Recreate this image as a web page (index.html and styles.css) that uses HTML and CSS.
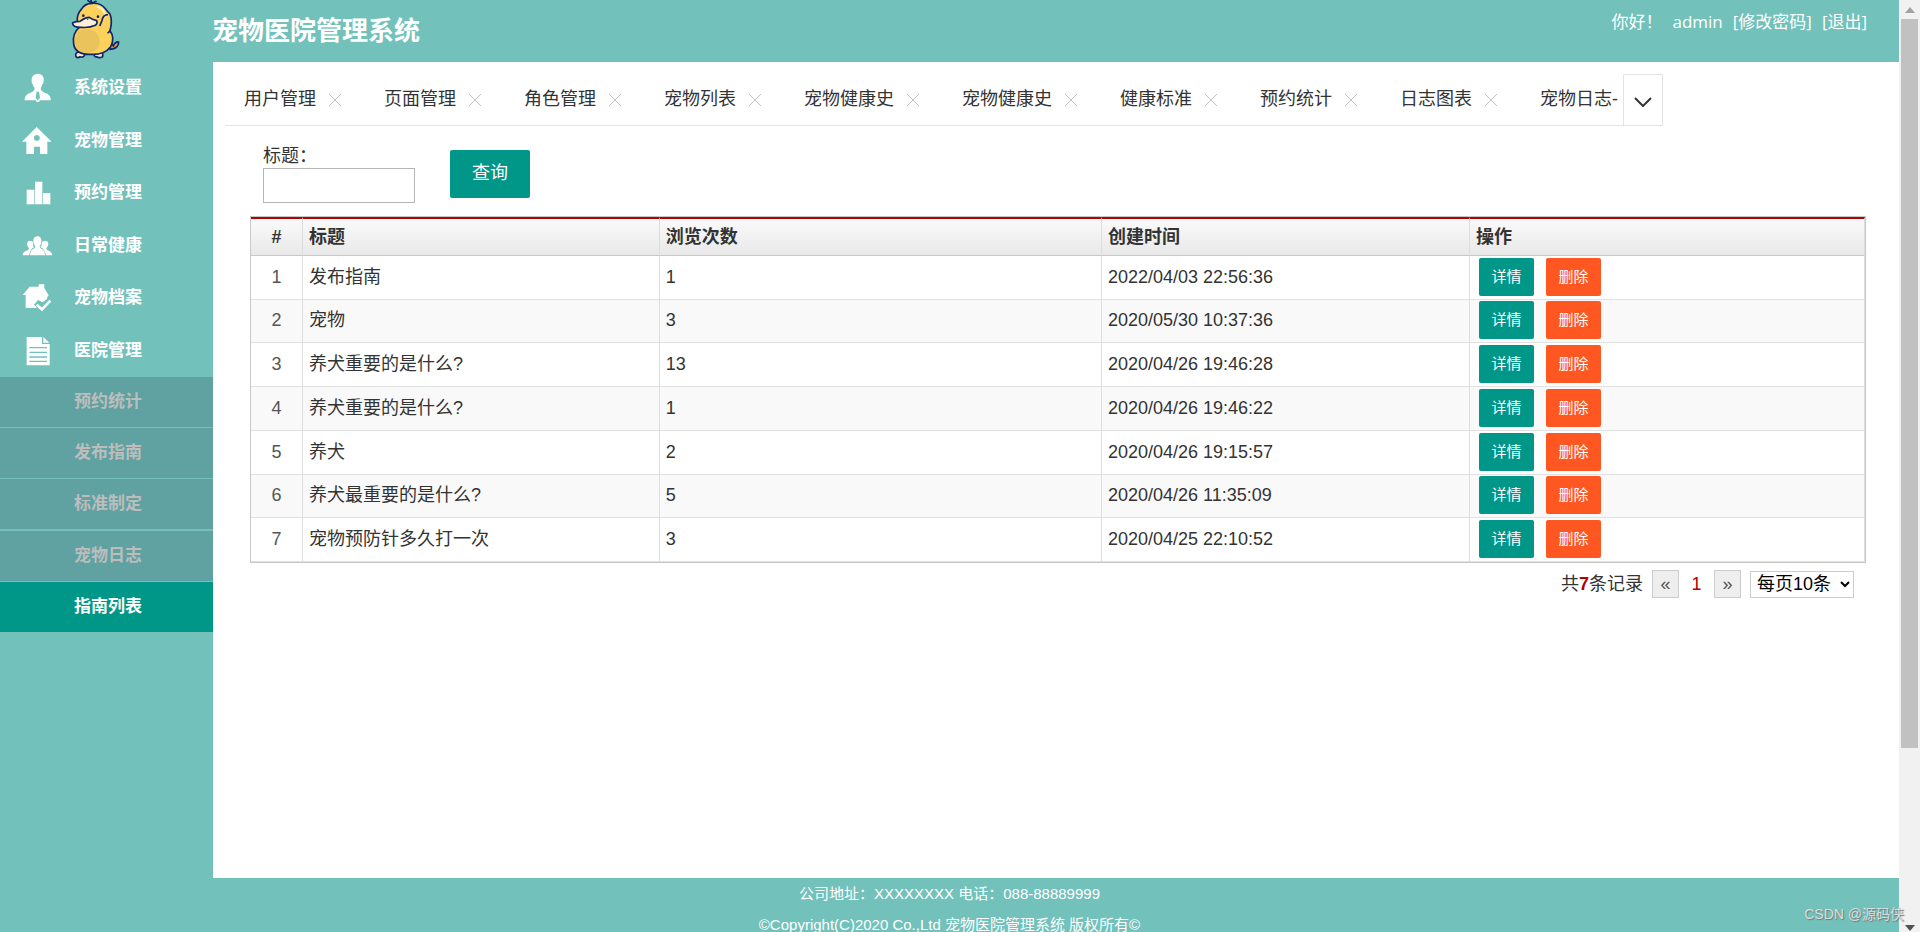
FILE: index.html
```html
<!DOCTYPE html>
<html lang="zh-CN">
<head>
<meta charset="utf-8">
<title>宠物医院管理系统</title>
<link rel="stylesheet" href="styles.css">
</head>
<body>
<div class="screen">
<div class="page">
  <header class="header">
    <svg class="logo" viewBox="0 0 210 192" aria-hidden="true">
      <g stroke="#13256b" stroke-width="5" stroke-linejoin="round" stroke-linecap="round">
        <path d="M152 128 L160 138 Q166 124 176 126 Q176 146 150 148 Z" fill="#dca43a"/>
        <path d="M48 170 Q44 158 56 156 Q70 152 74 164 Q72 174 60 170 Q54 176 48 170Z M102 164 Q110 152 124 156 Q130 160 128 170 Q116 176 110 170 Q104 172 102 164Z" fill="#fbead0"/>
        <path d="M96 10 Q74 10 64 28 Q50 42 52 64 L58 82 Q36 100 41 132 Q46 164 90 163 Q132 166 152 140 Q166 114 150 92 Q158 64 150 42 Q142 34 136 26 Q122 8 96 10Z" fill="#fdd25c"/>
        <path d="M96 10 L84 2 M96 10 L92 -2 M96 10 L108 4" fill="none"/>
      </g>
      <path d="M54 94 Q84 80 104 94 Q124 112 118 136 Q112 154 88 158 Q56 160 47 138 Q41 112 54 94Z" fill="#ebc35c"/>
      <path d="M112 20 Q134 26 136 50" stroke="#fff3cd" stroke-width="6" fill="none"/>
      <g stroke="#13256b" stroke-width="5" stroke-linecap="round" stroke-linejoin="round">
        <path d="M38 68 Q48 64 60 64 Q76 52 88 52 Q96 58 110 62 Q114 70 106 76 Q88 84 64 82 Q36 82 38 68Z" fill="#fff0d5"/>
        <path d="M142 44 Q128 46 126 62 L120 76 M144 98 Q148 96 150 92" fill="none"/>
      </g>
      <circle cx="70" cy="47" r="4" fill="#13256b"/><circle cx="114" cy="50" r="4" fill="#13256b"/>
      <circle cx="83" cy="58" r="2" fill="#13256b"/>
    </svg>
    <h1 class="title">宠物医院管理系统</h1>
    <div class="account">
      <span>你好！</span><span>admin</span><a href="#">[修改密码]</a><a href="#">[退出]</a>
    </div>
  </header>
  <div class="body">
    <nav class="sidebar">
      <ul class="menu">
        <li><a class="item" href="#"><svg class="icon" viewBox="0 0 90 90"><path d="M47 2 Q66 2 65 22 Q66 30 61 34 Q59 42 56 45 Q56 54 68 59 Q87 64 86 82 H53 L51 87 H44 L42 82 H8 Q7 64 26 59 Q38 54 38 45 Q34 40 32 34 Q28 30 29 22 Q28 4 47 2Z"/><path class="cut" d="M44 56 H51 L54 74 L47 83 L41 74Z"/></svg>系统设置</a></li>
        <li><a class="item" href="#"><svg class="icon" viewBox="0 0 90 90"><path fill-rule="evenodd" d="M44 3 L89 47 H76 V84 H54 V62 H36 V84 H13 V47 H0Z M44 27 A9 9 0 1 0 45 27Z"/></svg>宠物管理</a></li>
        <li><a class="item" href="#"><svg class="icon" viewBox="0 0 90 90"><path d="M14 35 H37 V79 H14Z M39 11 H61 V79 H39Z M63 45 H85 V79 H63Z"/></svg>预约管理</a></li>
        <li><a class="item" href="#"><svg class="icon" viewBox="0 0 90 90"><path d="M46 16 Q60 16 58 34 Q57 42 53 46 Q53 52 64 57 Q69 62 69 73 H24 Q24 62 29 57 Q40 52 40 46 Q34 40 34 32 Q33 17 46 16Z M25 29 Q31 29 33 34 Q32 44 36 49 Q23 55 22 73 H2 Q2 63 13 59 Q21 57 21 52 Q15 47 15 39 Q15 29 25 29Z M68 29 Q61 29 60 34 Q60 44 56 49 Q70 55 71 73 H91 Q90 63 80 59 Q73 57 73 52 Q79 47 79 39 Q79 29 68 29Z"/></svg>日常健康</a></li>
        <li><a class="item" href="#"><svg class="icon" viewBox="0 0 90 90"><path d="M23 11 H50 V4 H67 V15 L80 37 L76 42 L75 48 L62 58 L48 51 L36 65 L45 75 H11 V36 H2Z"/><path class="check" d="M44 65 L60 79 L85 53"/></svg>宠物档案</a></li>
        <li><a class="item" href="#"><svg class="icon" viewBox="0 0 90 90"><path d="M14 3 H60 V24 H83 V88 H14Z M64 3 L82 20 H64Z"/><path class="rule" d="M22 35 H75 M22 49 H75 M22 63 H75 M22 76 H75"/></svg>医院管理</a></li>
      </ul>
      <ul class="submenu">
        <li><a class="subitem" href="#">预约统计</a></li>
        <li><a class="subitem" href="#">发布指南</a></li>
        <li><a class="subitem" href="#">标准制定</a></li>
        <li class="split"><a class="subitem" href="#">宠物日志</a></li>
        <li><a class="subitem current" href="#">指南列表</a></li>
      </ul>
    </nav>
    <main class="content">
      <div class="tabbar">
        <div class="tabs">
          <div class="tab">用户管理<button class="close" aria-label="关闭"><svg viewBox="0 0 12 12"><path d="M0 0 L12 12 M12 0 L0 12"/></svg></button></div>
          <div class="tab">页面管理<button class="close" aria-label="关闭"><svg viewBox="0 0 12 12"><path d="M0 0 L12 12 M12 0 L0 12"/></svg></button></div>
          <div class="tab">角色管理<button class="close" aria-label="关闭"><svg viewBox="0 0 12 12"><path d="M0 0 L12 12 M12 0 L0 12"/></svg></button></div>
          <div class="tab">宠物列表<button class="close" aria-label="关闭"><svg viewBox="0 0 12 12"><path d="M0 0 L12 12 M12 0 L0 12"/></svg></button></div>
          <div class="tab">宠物健康史<button class="close" aria-label="关闭"><svg viewBox="0 0 12 12"><path d="M0 0 L12 12 M12 0 L0 12"/></svg></button></div>
          <div class="tab">宠物健康史<button class="close" aria-label="关闭"><svg viewBox="0 0 12 12"><path d="M0 0 L12 12 M12 0 L0 12"/></svg></button></div>
          <div class="tab">健康标准<button class="close" aria-label="关闭"><svg viewBox="0 0 12 12"><path d="M0 0 L12 12 M12 0 L0 12"/></svg></button></div>
          <div class="tab">预约统计<button class="close" aria-label="关闭"><svg viewBox="0 0 12 12"><path d="M0 0 L12 12 M12 0 L0 12"/></svg></button></div>
          <div class="tab">日志图表<button class="close" aria-label="关闭"><svg viewBox="0 0 12 12"><path d="M0 0 L12 12 M12 0 L0 12"/></svg></button></div>
          <div class="tab">宠物日志-</div>
        </div>
        <button class="more" aria-label="更多"><svg viewBox="0 0 18 10"><path d="M1 1 L9 9 L17 1"/></svg></button>
      </div>
      <form class="search">
        <div class="field">
          <label for="title">标题：</label>
          <input id="title" type="text">
        </div>
        <button class="query" type="button">查询</button>
      </form>
      <table class="grid">
        <colgroup><col class="c-num"><col class="c-title"><col class="c-views"><col class="c-time"><col></colgroup>
        <thead><tr><th class="num">#</th><th>标题</th><th>浏览次数</th><th>创建时间</th><th>操作</th></tr></thead>
        <tbody>
          <tr><td class="num">1</td><td>发布指南</td><td>1</td><td>2022/04/03 22:56:36</td><td class="ops"><div><button class="btn">详情</button><button class="btn danger">删除</button></div></td></tr>
          <tr><td class="num">2</td><td>宠物</td><td>3</td><td>2020/05/30 10:37:36</td><td class="ops"><div><button class="btn">详情</button><button class="btn danger">删除</button></div></td></tr>
          <tr><td class="num">3</td><td>养犬重要的是什么?</td><td>13</td><td>2020/04/26 19:46:28</td><td class="ops"><div><button class="btn">详情</button><button class="btn danger">删除</button></div></td></tr>
          <tr><td class="num">4</td><td>养犬重要的是什么?</td><td>1</td><td>2020/04/26 19:46:22</td><td class="ops"><div><button class="btn">详情</button><button class="btn danger">删除</button></div></td></tr>
          <tr><td class="num">5</td><td>养犬</td><td>2</td><td>2020/04/26 19:15:57</td><td class="ops"><div><button class="btn">详情</button><button class="btn danger">删除</button></div></td></tr>
          <tr><td class="num">6</td><td>养犬最重要的是什么?</td><td>5</td><td>2020/04/26 11:35:09</td><td class="ops"><div><button class="btn">详情</button><button class="btn danger">删除</button></div></td></tr>
          <tr><td class="num">7</td><td>宠物预防针多久打一次</td><td>3</td><td>2020/04/25 22:10:52</td><td class="ops"><div><button class="btn">详情</button><button class="btn danger">删除</button></div></td></tr>
        </tbody>
      </table>
      <div class="pager">
        <span>共<b>7</b>条记录</span>
        <button class="step" aria-label="上一页">«</button>
        <span class="pageno">1</span>
        <button class="step" aria-label="下一页">»</button>
        <select aria-label="每页条数"><option>每页10条</option></select>
      </div>
    </main>
  </div>
  <footer class="footer">
    <p>公司地址：XXXXXXXX 电话：088-88889999</p>
    <p>©Copyright(C)2020 Co.,Ltd 宠物医院管理系统 版权所有©</p>
  </footer>
</div>
<div class="scrollbar" aria-hidden="true">
  <svg class="arrow" viewBox="0 0 10 6"><path fill="#a3a3a3" d="M0 6 L5 0 L10 6Z"/></svg>
  <div class="track"><div class="thumb"></div></div>
  <svg class="arrow" viewBox="0 0 10 6"><path fill="#505050" d="M0 0 L5 6 L10 0Z"/></svg>
</div>
<div class="watermark">CSDN @源码侠</div>
</div>
</body>
</html>
```

FILE: styles.css
```css
* { box-sizing: border-box; }

body {
  margin: 0;
  font: 18px/24px "Liberation Sans", "Noto Sans CJK SC", sans-serif;
  color: #333;
}

a { color: inherit; text-decoration: none; }
ul { margin: 0; padding: 0; list-style: none; }
button, input, select { font: inherit; color: inherit; margin: 0; }
button { border: 0; padding: 0; background: none; cursor: pointer; }
svg { display: block; }

.screen {
  position: relative;
  display: flex;
  height: 100vh;
  overflow: hidden;
}

.page {
  flex: 1;
  min-width: 0;
  display: flex;
  flex-direction: column;
  background: #72c1bb;
}

/* header */
.header {
  display: flex;
  align-items: flex-start;
  height: 62px;
  flex: none;
  color: #fff;
}
.logo { width: 70px; height: 64px; margin: 0 82px 0 60px; flex: none; }
.title { margin: 0; font-size: 26px; line-height: 62px; font-weight: bold; }
.account {
  display: flex;
  gap: 10px;
  margin-left: auto;
  padding: 10px 32px 0 0;
  font: 17px/24px "Open Sans", "Noto Sans CJK SC", sans-serif;
}

.body { flex: 1; min-height: 0; display: flex; }

/* sidebar */
.sidebar {
  width: 213px;
  flex: none;
  font-size: 17px;
  font-weight: bold;
  color: #fff;
}
.item {
  display: flex;
  align-items: center;
  gap: 22px;
  height: 52px;
  padding-left: 22px;
}
.menu li:nth-child(even) .item { height: 53px; }
.icon { width: 30px; height: 30px; fill: #fff; }
.icon .cut { fill: #72c1bb; }
.icon .check { fill: none; stroke: #fff; stroke-width: 8; }
.icon .rule { fill: none; stroke: #72c1bb; stroke-width: 4; }
.submenu { display: grid; gap: 1px; }
.submenu .split { margin-top: 1px; }
.subitem {
  display: block;
  padding-left: 74px;
  line-height: 50px;
  color: #bdbdbd;
  background: #5fa2a1;
}
.subitem.current { color: #fff; background: #009688; }

/* content */
.content {
  flex: 1;
  min-width: 0;
  padding: 12px 32px 0 12px;
  background: #fff;
}
.tabbar {
  display: flex;
  width: 1438px;
  max-width: 100%;
  border-bottom: 1px solid #e2e2e2;
}
.tabs { flex: 1; min-width: 0; display: flex; overflow: hidden; }
.tab {
  display: flex;
  align-items: center;
  flex: none;
  gap: 13px;
  height: 51px;
  padding: 0 24px 2px 19px;
  white-space: nowrap;
}
.close svg { width: 12px; height: 12px; margin-top: 2px; stroke: #c2c2c2; fill: none; }
.more {
  display: flex;
  align-items: center;
  justify-content: center;
  width: 40px;
  border: 1px solid #e2e2e2;
  border-bottom: 0;
  border-radius: 2px 2px 0 0;
}
.more svg { width: 18px; height: 10px; margin-top: 4px; stroke: #333; stroke-width: 2; fill: none; }

.search {
  display: flex;
  align-items: flex-start;
  gap: 35px;
  padding: 18px 0 13px 38px;
}
.field label { display: block; padding-top: 1px; line-height: 23px; }
.field input {
  display: block;
  width: 152px;
  height: 35px;
  border: 1px solid #b5b5b5;
  background: #fff;
}
.query {
  width: 80px;
  height: 48px;
  margin-top: 6px;
  padding-bottom: 2px;
  border-radius: 2px;
  background: #009688;
  color: #fff;
}

/* table */
.grid {
  width: calc(100% - 26px);
  margin-left: 25px;
  table-layout: fixed;
  border-collapse: separate;
  border-spacing: 0;
  border: 1px solid #c8c8c8;
}
.c-num { width: 52px; }
.c-title { width: 22.1%; }
.c-views { width: 27.4%; }
.c-time { width: 22.8%; }
.grid th, .grid td {
  padding: 0 6px;
  text-align: left;
  border-right: 1px solid #ddd;
  border-bottom: 1px solid #e1e1e1;
}
.grid th {
  height: 39px;
  border-top: 2px solid #b50000;
  border-bottom-color: #c8c8c8;
  background: linear-gradient(#fafafa, #e8e8e8);
}
.grid td { height: 44px; padding-bottom: 2px; }
.grid tbody tr:nth-child(4n+2) td { height: 43px; }
.grid tbody tr:nth-child(even) { background: #f9f9f9; }
.grid .num { text-align: center; }
.grid td.num { color: #555; }
.ops div { display: flex; gap: 12px; padding-left: 3px; }
.btn {
  width: 55px;
  height: 38px;
  border-radius: 2px;
  background: #009688;
  color: #fff;
  font-size: 15px;
}
.btn.danger { background: #ff5722; }

.pager {
  display: flex;
  justify-content: flex-end;
  align-items: center;
  gap: 9px;
  padding: 7px 13px 0 0;
}
.pager b, .pageno { color: #b50000; }
.pageno { width: 17px; text-align: center; }
.step {
  width: 27px;
  height: 28px;
  border: 1px solid #ccc;
  background: #eee;
  color: #555;
}
.pager select {
  width: 104px;
  height: 27px;
  padding-left: 2px;
  border: 1px solid #ccc;
  background-color: #fff;
  color: #000;
}

/* footer */
.footer {
  flex: none;
  height: 54px;
  color: #fff;
  font-size: 15px;
  text-align: center;
}
.footer p { margin: 0; line-height: 31px; }

/* window scrollbar */
.scrollbar {
  width: 21px;
  flex: none;
  display: flex;
  flex-direction: column;
  align-items: center;
  gap: 6px;
  padding: 7px 0 1px;
  background: #f1f1f1;
}
.arrow { width: 10px; height: 6px; flex: none; }
.track { flex: 1; }
.thumb { width: 17px; height: 81%; background: #c1c1c1; }

.watermark {
  position: absolute;
  right: 16px;
  bottom: 6px;
  color: #d8dddd;
  font-size: 14px;
  text-shadow: 1px 1px 1px #777;
}
```
